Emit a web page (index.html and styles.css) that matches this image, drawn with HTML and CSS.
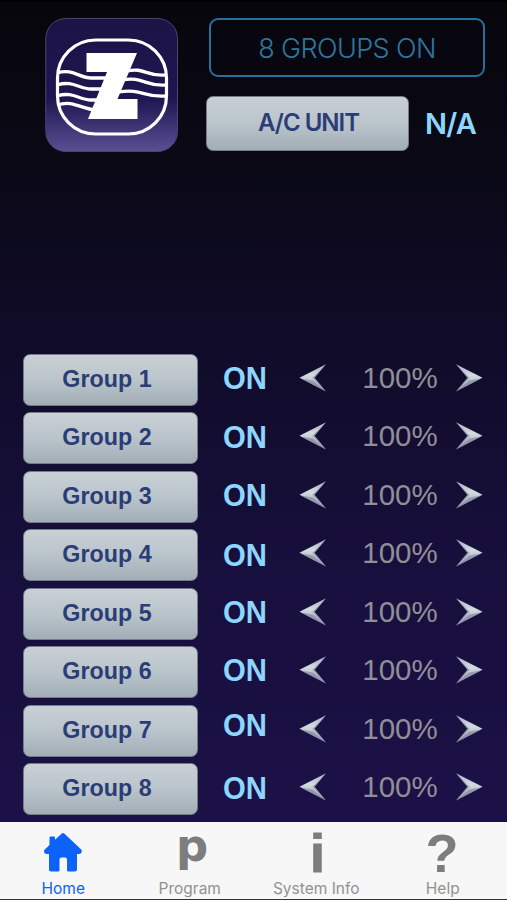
FILE: index.html
```html
<!DOCTYPE html>
<html lang="en">
<head>
<meta charset="utf-8">
<meta name="viewport" content="width=device-width">
<title>Home</title>
<link rel="stylesheet" href="styles.css">
</head>
<body>
<svg class="defs" width="0" height="0" aria-hidden="true">
  <defs>
    <linearGradient id="steel" x1="0" y1="0" x2="0" y2="1">
      <stop offset="0" stop-color="#a9abc6"/>
      <stop offset=".4" stop-color="#d3dce0"/>
      <stop offset=".55" stop-color="#c4ccd4"/>
      <stop offset="1" stop-color="#a5a4c4"/>
    </linearGradient>
    <symbol id="arrow" viewBox="0 0 28 30">
      <path d="M.5 14.8 27 1.200 15.500 14.800 27 28.600Z" fill="url(#steel)"/>
      <path d="M1.500 15.500 14 17.500 27 28.600Z" fill="#6d7089" opacity=".5"/>
      <path d="M27 1.200 13.500 14.800 27 28.600 15.500 14.800Z" fill="#66697f" opacity=".5"/>
    </symbol>
  </defs>
</svg>
<main class="screen">
  <header class="header">
    <svg class="logo" viewBox="0 0 133 134">
      <defs>
        <linearGradient id="tile" x1="0" y1="0" x2="0" y2="1">
          <stop offset="0" stop-color="#1c1446"/>
          <stop offset=".6" stop-color="#1d1650"/>
          <stop offset="1" stop-color="#5a4f94"/>
        </linearGradient>
        <clipPath id="oval"><rect x="12" y="21" width="109" height="95" rx="38"/></clipPath>
      </defs>
      <rect x=".8" y=".5" width="131.700" height="133" rx="20" fill="url(#tile)" stroke="#4c4570"/>
      <g clip-path="url(#oval)" fill="none" stroke="#fff" stroke-width="3.3">
        <path d="M12 55C28 50 34 60 46 60H62"/>
        <path d="M12 67C28 62 34 71 46 71H62"/>
        <path d="M12 78C28 73 34 82 46 82H62"/>
        <path d="M12 87C28 82 34 90 50 92H62"/>
        <path d="M82 53C100 49 101 59 121 57"/>
        <path d="M77 62C98 58 101 69 121 67"/>
        <path d="M74 74C96 70 100 80 121 78"/>
      </g>
      <rect x="12.500" y="22" width="109" height="94" rx="38" fill="none" stroke="#fff" stroke-width="3.2"/>
      <path d="M41.500 35H92L72.500 81H92.500V101H43L62 54H41.500Z" fill="#fff"/>
    </svg>
    <div class="controls">
      <div class="status">8 GROUPS ON</div>
      <div class="unit-row">
        <button class="key unit">A/C UNIT</button>
        <span class="unit-state">N/A</span>
      </div>
    </div>
  </header>

  <section class="groups">
    <div class="group"><button class="key"><span class="name">Group 1</span></button><span class="on">ON</span><svg class="arrow"><use href="#arrow"/></svg><span class="level">100%</span><svg class="arrow next"><use href="#arrow"/></svg></div>
    <div class="group"><button class="key"><span class="name">Group 2</span></button><span class="on">ON</span><svg class="arrow"><use href="#arrow"/></svg><span class="level">100%</span><svg class="arrow next"><use href="#arrow"/></svg></div>
    <div class="group"><button class="key"><span class="name">Group 3</span></button><span class="on">ON</span><svg class="arrow"><use href="#arrow"/></svg><span class="level">100%</span><svg class="arrow next"><use href="#arrow"/></svg></div>
    <div class="group"><button class="key"><span class="name">Group 4</span></button><span class="on lower">ON</span><svg class="arrow"><use href="#arrow"/></svg><span class="level">100%</span><svg class="arrow next"><use href="#arrow"/></svg></div>
    <div class="group"><button class="key"><span class="name">Group 5</span></button><span class="on">ON</span><svg class="arrow"><use href="#arrow"/></svg><span class="level">100%</span><svg class="arrow next"><use href="#arrow"/></svg></div>
    <div class="group"><button class="key"><span class="name">Group 6</span></button><span class="on raised">ON</span><svg class="arrow"><use href="#arrow"/></svg><span class="level">100%</span><svg class="arrow next"><use href="#arrow"/></svg></div>
    <div class="group"><button class="key"><span class="name">Group 7</span></button><span class="on high">ON</span><svg class="arrow"><use href="#arrow"/></svg><span class="level">100%</span><svg class="arrow next"><use href="#arrow"/></svg></div>
    <div class="group"><button class="key"><span class="name">Group 8</span></button><span class="on">ON</span><svg class="arrow"><use href="#arrow"/></svg><span class="level">100%</span><svg class="arrow next"><use href="#arrow"/></svg></div>
  </section>

  <nav class="tabs">
    <a class="tab active">
      <svg class="tab-icon" viewBox="0 0 40 46"><path d="M6.5 5.5Q6.5 4.5 7.5 4.5H11Q12 4.5 12 5.5V7.8L18.5 1.7Q20 .3 21.500 1.700L38.200 17.500Q39.500 19 38.500 20.500 37.700 22 36 22H34V37.500Q34 39.500 32 39.500H25.500Q24 39.500 24 38V27.500Q24 25.500 22 25.500H18.500Q16.500 25.500 16.500 27.500V38Q16.500 39.500 15 39.500H8Q6 39.500 6 37.500V22H4Q2 22 1.200 20.500 .5 19 1.800 17.500L6.500 13Z"/></svg>
      <span>Home</span>
    </a>
    <a class="tab">
      <svg class="tab-icon" viewBox="0 0 40 46"><text class="letter-p" x="22" y="28.500">p</text></svg>
      <span>Program</span>
    </a>
    <a class="tab">
      <svg class="tab-icon" viewBox="0 0 40 46"><text class="letter letter-i" x="21.500" y="39.500">i</text></svg>
      <span>System Info</span>
    </a>
    <a class="tab">
      <svg class="tab-icon" viewBox="0 0 40 46"><text class="letter" x="19" y="39.500">?</text></svg>
      <span>Help</span>
    </a>
  </nav>
</main>
</body>
</html>
```

FILE: styles.css
```css
* { box-sizing: border-box; }

body { margin: 0; background: #07060d; }

.defs { display: block; }

.screen {
  width: 507px;
  height: 900px;
  display: flex;
  flex-direction: column;
  overflow: hidden;
  border-top: 2px solid #000;
  background: linear-gradient(#07060c 0, #0a0916 170px, #100c2a 360px, #170f3c 560px, #1b1147 820px);
}

.header {
  display: flex;
  gap: 28px;
  height: 352px;
  padding: 16px 0 0 45px;
}

.logo { width: 133px; height: 134px; flex: none; }

.status {
  width: 276px;
  height: 59px;
  margin-left: 3px;
  border: 2px solid #286f99;
  border-radius: 9px;
  color: #2f759f;
  font: 300 27px/58px Inter, sans-serif;
  letter-spacing: -.6px;
  text-align: center;
}

.unit-row { display: flex; align-items: center; margin-top: 19px; }

.key {
  width: 175px;
  height: 52px;
  flex: none;
  padding: 0 7px 2px 0;
  border: 1px solid #777b89;
  border-radius: 7px;
  background: linear-gradient(#c9d0d6, #bac4cb 50%, #a2adb6);
  color: #2b3d76;
  font: bold 24px/48px "Liberation Sans", sans-serif;
  text-align: center;
}

.name { display: block; transform: scaleX(.97); }

.key.unit {
  width: 203px;
  height: 55px;
  padding: 0 0 1px 2px;
  font: 600 24px/50px Inter, sans-serif;
  letter-spacing: -1px;
}

.unit-state {
  margin-left: 16px;
  color: #8dd6ff;
  font: 600 29px/54px Inter, sans-serif;
  letter-spacing: -.8px;
}

.groups { height: 468px; flex: none; }

.group {
  display: flex;
  align-items: center;
  height: 58.5px;
  padding: 0 0 7px 23px;
}

.on {
  width: 78px;
  margin-top: -3px;
  padding-left: 25px;
  color: #8dd6ff;
  font: bold 31.5px/50px "Liberation Sans", sans-serif;
  transform: scaleX(.93);
  transform-origin: 25px 50%;
}

.lower { transform: translateY(1px) scaleX(.93); }
.raised { transform: translateY(-1px) scaleX(.93); }
.high { transform: translateY(-4px) scaleX(.93); }

.arrow { width: 28px; height: 30px; flex: none; margin: -4px 0 0 23px; }
.arrow.next { margin-left: 7px; transform: scaleX(-1); }

.level {
  width: 96px;
  flex: none;
  margin: -4px 0 0 25px;
  color: #918e98;
  font: 29.5px/50px "Liberation Sans", sans-serif;
  text-align: center;
}

.tabs {
  display: flex;
  height: 78px;
  background: #f7f7f8;
  border-bottom: 1px solid #333;
}

.tab {
  width: 126.5px;
  display: flex;
  flex-direction: column;
  align-items: center;
  padding-top: 10px;
  color: #929292;
  font: 15.5px/22px Inter, sans-serif;
}

.tab.active { color: #0c62fb; }
.tab-icon { width: 40px; height: 46px; flex: none; fill: #7d7d7d; overflow: visible; }
.active .tab-icon { fill: #0c62fb; }
.letter { font: bold 54px "Liberation Sans", sans-serif; text-anchor: middle; }
.letter-i { stroke: #7d7d7d; stroke-width: 1px; }
.letter-p { font: bold 45px "DejaVu Sans", sans-serif; text-anchor: middle; }
```
